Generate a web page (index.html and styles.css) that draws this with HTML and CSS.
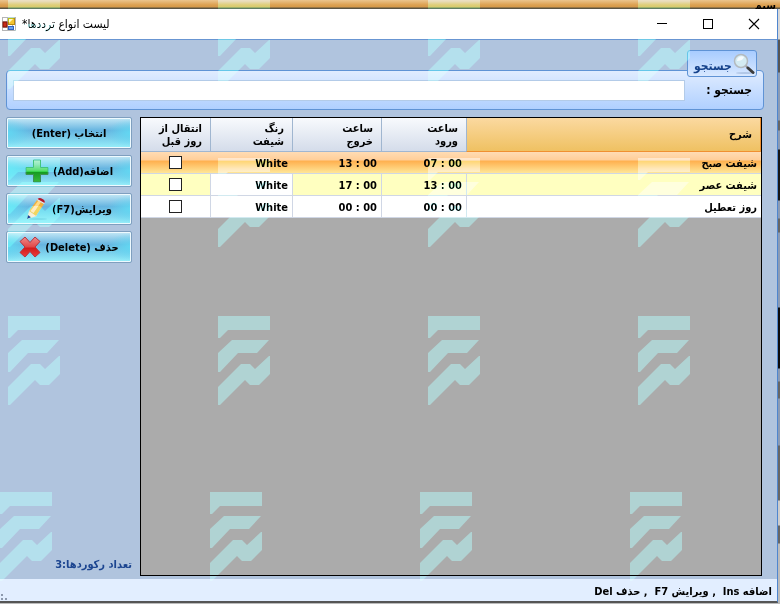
FILE: index.html
```html
<!DOCTYPE html>
<html lang="fa" dir="rtl">
<head>
<meta charset="utf-8">
<title>لیست انواع ترددها</title>
<link rel="stylesheet" href="styles.css">
</head>
<body>
<div class="desktop">
  <div class="backdrop-bar"><span>سیم</span></div>
  <div class="window">
    <header class="titlebar" dir="ltr">
      <svg class="app-icon" width="14" height="14" viewBox="0 0 14 14" aria-hidden="true">
        <rect x=".5" y=".5" width="13" height="13" fill="#fff" stroke="#b5b5b5"/>
        <path d="M5.500 0v14M0 4.500h6M0 10.500h6M10.500 8v6" stroke="#b5b5b5"/>
        <rect x="6.500" y="1.500" width="6" height="6" fill="#f4c430" stroke="#b98a10"/>
        <path d="M7 6V2h4z" fill="#fff0a0"/>
        <rect x="1" y="5" width="4" height="5" fill="#c62b18" stroke="#801408"/>
        <rect x="6.500" y="9.500" width="5" height="3" fill="#6aa0ee" stroke="#2f62bd"/>
      </svg>
      <h1 dir="rtl">لیست انواع ترددها*</h1>
      <div class="window-controls">
        <button type="button" aria-label="Minimize"><svg width="12" height="12" viewBox="0 0 12 12"><path d="M1 5.500h10" stroke="#000"/></svg></button>
        <button type="button" aria-label="Maximize"><svg width="12" height="12" viewBox="0 0 12 12"><rect x="1.500" y="1.500" width="9" height="9" fill="none" stroke="#000"/></svg></button>
        <button type="button" aria-label="Close"><svg width="12" height="12" viewBox="0 0 12 12"><path d="M1 1l10 10M11 1L1 11" stroke="#000" stroke-width="1.100"/></svg></button>
      </div>
    </header>

    <section class="search">
      <div class="search-tab">
        <svg width="22" height="22" viewBox="0 0 22 22" aria-hidden="true">
          <ellipse cx="12" cy="20" rx="9" ry="1" fill="#7f9cc4" opacity=".4"/>
          <path d="M12.500 12.500l2.500 2.500" stroke="#999" stroke-width="2"/>
          <path d="M15 15l5 4.500" stroke="#3c3c3c" stroke-width="3" stroke-linecap="round"/>
          <circle cx="8" cy="8" r="6.500" fill="#d4ebf2" stroke="#b4babe" stroke-width="1.500"/>
          <path d="M4 8a4.500 4.500 0 0 1 7-4c-1 3-4 4-7 4z" fill="#fff" opacity=".8"/>
        </svg>
        <span>جستجو</span>
      </div>
      <label for="query">جستجو :</label>
      <input id="query" type="text">
    </section>

    <main class="content">
      <div class="grid">
        <table>
          <colgroup><col><col class="c-in"><col class="c-out"><col class="c-color"><col class="c-prev"></colgroup>
          <thead>
            <tr><th class="sorted">شرح</th><th>ساعت<br>ورود</th><th>ساعت<br>خروج</th><th>رنگ<br>شیفت</th><th>انتقال از<br>روز قبل</th></tr>
          </thead>
          <tbody>
            <tr class="selected"><td>شیفت صبح</td><td><bdi dir="ltr">07 : 00</bdi></td><td><bdi dir="ltr">13 : 00</bdi></td><td>White</td><td class="check"><input type="checkbox" aria-label="انتقال از روز قبل"></td></tr>
            <tr class="alt"><td>شیفت عصر</td><td><bdi dir="ltr">13 : 00</bdi></td><td><bdi dir="ltr">17 : 00</bdi></td><td class="color">White</td><td class="check"><input type="checkbox" aria-label="انتقال از روز قبل"></td></tr>
            <tr><td>روز تعطیل</td><td><bdi dir="ltr">00 : 00</bdi></td><td><bdi dir="ltr">00 : 00</bdi></td><td>White</td><td class="check"><input type="checkbox" aria-label="انتقال از روز قبل"></td></tr>
          </tbody>
        </table>
      </div>
      <aside class="side">
        <button type="button" class="action">انتخاب (Enter)</button>
        <button type="button" class="action">اضافه(Add)
          <svg width="24" height="24" viewBox="0 0 24 24" aria-hidden="true">
            <defs><linearGradient id="green" x2="0" y2="1"><stop stop-color="#b5e8a5"/><stop offset=".5" stop-color="#4fbd45"/><stop offset=".55" stop-color="#159a20"/><stop offset="1" stop-color="#37b83a"/></linearGradient></defs>
            <path d="M8.500 1h7v7.500H23v7h-7.500V23h-7v-7.500H1v-7h7.500z" fill="url(#green)" stroke="#3f8f55" stroke-linejoin="round"/>
          </svg>
        </button>
        <button type="button" class="action">ویرایش(F7)
          <svg width="22" height="24" viewBox="0 0 22 24" aria-hidden="true">
            <ellipse cx="12" cy="22" rx="9" ry="1" fill="#5b94b8" opacity=".4"/>
            <path d="M1 22l2-8 8 5z" fill="#f8dfb4"/>
            <path d="M3 14l8-11 7 4-8 12z" fill="#f2b040"/>
            <path d="M4.500 14l8-10.500 2.500 1.500-7.500 11z" fill="#ffdc88"/>
            <path d="M11 3l1-1.500 7 4L18 7z" fill="#e8e8e8"/>
            <path d="M11.500 2q2-2 5 0 3 1.500 2 4z" fill="#b3182a"/>
            <path d="M1 22l1-4 3 2.200z" fill="#182866"/>
          </svg>
        </button>
        <button type="button" class="action">حذف (Delete)
          <svg width="22" height="22" viewBox="0 0 22 22" aria-hidden="true">
            <defs><linearGradient id="red" x2="0" y2="1"><stop stop-color="#f08a8a"/><stop offset=".5" stop-color="#e04848"/><stop offset=".55" stop-color="#d01c1c"/><stop offset="1" stop-color="#ee3c3c"/></linearGradient></defs>
            <path d="M6 1l5 5.500L16 1l5 4.500-5 5.500 5 5.500-5 4.500-5-5.500L6 21l-5-4.500L6 11 1 5.500z" fill="url(#red)" stroke="#b53440" stroke-linejoin="round"/>
          </svg>
        </button>
        <p class="count">تعداد رکوردها:3</p>
      </aside>
    </main>

    <footer class="status">
      <span>اضافه Ins &nbsp;, ویرایش F7 &nbsp;, حذف Del</span>
      <svg class="grip" width="8" height="8" viewBox="0 0 8 8" aria-hidden="true"><path d="M1 1h2v2H1zM1 5h2v2H1zM5 5h2v2H5z" fill="#8d99ad"/></svg>
    </footer>
  </div>

  <svg class="watermark" aria-hidden="true">
    <defs>
      <symbol id="mark" viewBox="0 0 52 90" width="52" height="90">
        <path d="M0 0h52v14H10L2 22H0zM14 24h37L39 37H20L2 56H0V37zM0 71l23-23h9l5 5L51 40h1v18L41 69h-9l-5-5L2 89H0z"/>
      </symbol>
      <g id="row"><use href="#mark"/><use href="#mark" x="210"/><use href="#mark" x="420"/><use href="#mark" x="630"/></g>
    </defs>
    <g fill="#87bdbd">
      <use href="#row" x="8"/><use href="#row" x="8" y="158"/><use href="#row" x="8" y="316"/><use href="#row" y="492"/>
    </g>
  </svg>
</div>
</body>
</html>
```
FILE: styles.css
```css
* { box-sizing: border-box; }

body {
  margin: 0;
  font: bold 11px/13px "DejaVu Sans Condensed", "DejaVu Sans", Tahoma, sans-serif;
  color: #000;
}

button, input { font: inherit; }

.desktop {
  position: relative;
  display: flex;
  flex-direction: column;
  height: 100vh;
  padding-right: 2px;
  padding-bottom: 1px;
  overflow: hidden;
  isolation: isolate;
  background: linear-gradient(#d8d8d8 39px, #555 40px 72px, #8a9bb5 73px 120px, #666 121px 130px, #8a9bb5 131px 149px, #151515 150px 200px, #8a9bb5 201px 218px, #666 219px 232px, #8a9bb5 233px 307px, #0c0c0c 308px 368px, #8a9bb5 369px 381px, #666 382px 398px, #8a9bb5 399px 445px, #666 446px 500px, #ccc 501px 525px, #666 526px 543px, #bbb 544px);
}

.backdrop-bar {
  flex: none;
  height: 9px;
  margin-right: -2px;
  padding: 0 4px;
  overflow: hidden;
  line-height: 12px;
  background: linear-gradient(#ecc58e, #dca050 5px, #d69a4a 7px, #5b5443 8px);
}

.window {
  flex: 1;
  min-height: 0;
  display: flex;
  flex-direction: column;
  background: #b0c4de;
  border-right: 1px solid #4f86cf;
  border-bottom: 2px solid #555;
}

.titlebar {
  flex: none;
  display: flex;
  align-items: center;
  height: 31px;
  padding-left: 2px;
  background: #fff;
  border-bottom: 1px solid #6895d2;
}

.titlebar h1 {
  margin: 0 6px;
  font-size: 12px;
  font-weight: normal;
  line-height: 16px;
}

.window-controls { display: flex; margin-left: auto; }

.window-controls button {
  display: grid;
  place-items: center;
  width: 46px;
  height: 30px;
  padding: 0;
  border: 0;
  background: none;
}

.search {
  flex: none;
  position: relative;
  display: flex;
  align-items: center;
  height: 40px;
  margin: 30px 13px 0 6px;
  padding: 0 11px 0 6px;
  border: 1px solid #5f93d5;
  border-radius: 4px;
  background: linear-gradient(#e0ecff, #b0d0ff);
}

.search label { width: 67px; font-size: 12px; }

.search input {
  flex: 1;
  min-width: 0;
  height: 21px;
  padding: 0 4px;
  border: 1px solid #b3cbe8;
  background: #fff;
}

.search-tab {
  position: absolute;
  top: -21px;
  right: 6px;
  display: flex;
  align-items: center;
  justify-content: space-between;
  width: 70px;
  height: 27px;
  padding: 0 1px 0 6px;
  border: 1px solid #5f93d5;
  border-radius: 3px;
  background: linear-gradient(#a8ccff, #d8e8ff);
  color: #15428b;
  font-size: 12px;
}

.search-tab span { padding-top: 6px; }

.content {
  flex: 1;
  min-height: 0;
  display: flex;
  gap: 8px;
  padding: 7px 15px 3px 6px;
}

.grid {
  flex: 1;
  min-width: 0;
  border: 1px solid #000;
  background: #ababab;
}

table {
  width: 100%;
  border-collapse: separate;
  border-spacing: 0;
  table-layout: fixed;
}

.c-in { width: 85px; }
.c-out { width: 89px; }
.c-color { width: 82px; }
.c-prev { width: 69px; }

th {
  height: 34px;
  padding: 0 8px;
  text-align: right;
  border-bottom: 1px solid #a0b6d0;
  border-left: 1px solid #a0b6d0;
  background: linear-gradient(#f8fafd, #d4dcea);
}

th:last-child, td:last-child { border-left: 0; }

th.sorted {
  border-right: 1px solid #f09030;
  border-bottom-color: #f09030;
  background: linear-gradient(#fbd9a0, #efc162);
}

td {
  height: 22px;
  padding: 1px 4px 0;
  border-bottom: 1px solid #d0d7e5;
  border-left: 1px solid #d0d7e5;
  background: #fff;
  text-align: right;
}

.alt td { background: #ffffc0; }
.alt td.color { background: #fff; }

.selected td {
  border-left: 0;
  background: linear-gradient(#ffdcb4, #ffce98 8px, #ffb04e 9px, #ffe698);
}

td.check { padding-top: 0; text-align: center; line-height: 0; }

.check input {
  appearance: none;
  width: 13px;
  height: 13px;
  margin: 0;
  border: 1px solid #222;
  background: #fff;
}

.side {
  flex: none;
  display: flex;
  flex-direction: column;
  gap: 6px;
  width: 126px;
}

.action {
  display: flex;
  align-items: center;
  justify-content: center;
  gap: 4px;
  height: 32px;
  padding: 0;
  white-space: nowrap;
  color: #000;
  border: 1px solid #7f9fbf;
  border-radius: 2px;
  box-shadow: inset 0 0 0 1px #eefaff;
  background:
    radial-gradient(ellipse 24px 14px at 0 50%, #62d8f2, transparent),
    radial-gradient(ellipse 24px 14px at 100% 50%, #62d8f2, transparent),
    linear-gradient(#c4e8f6, #66b4e0 42%, #74c6e8 60%, #98f0fa);
}

.count {
  margin: auto 0 5px;
  color: #1c4590;
}

.status {
  flex: none;
  display: flex;
  align-items: center;
  justify-content: space-between;
  height: 22px;
  padding: 2px 5px 0 0;
  background: #e2eeff;
}

.grip { align-self: flex-end; }

.watermark {
  position: absolute;
  inset: 0;
  width: 100%;
  height: 100%;
  pointer-events: none;
  mix-blend-mode: overlay;
}
```
